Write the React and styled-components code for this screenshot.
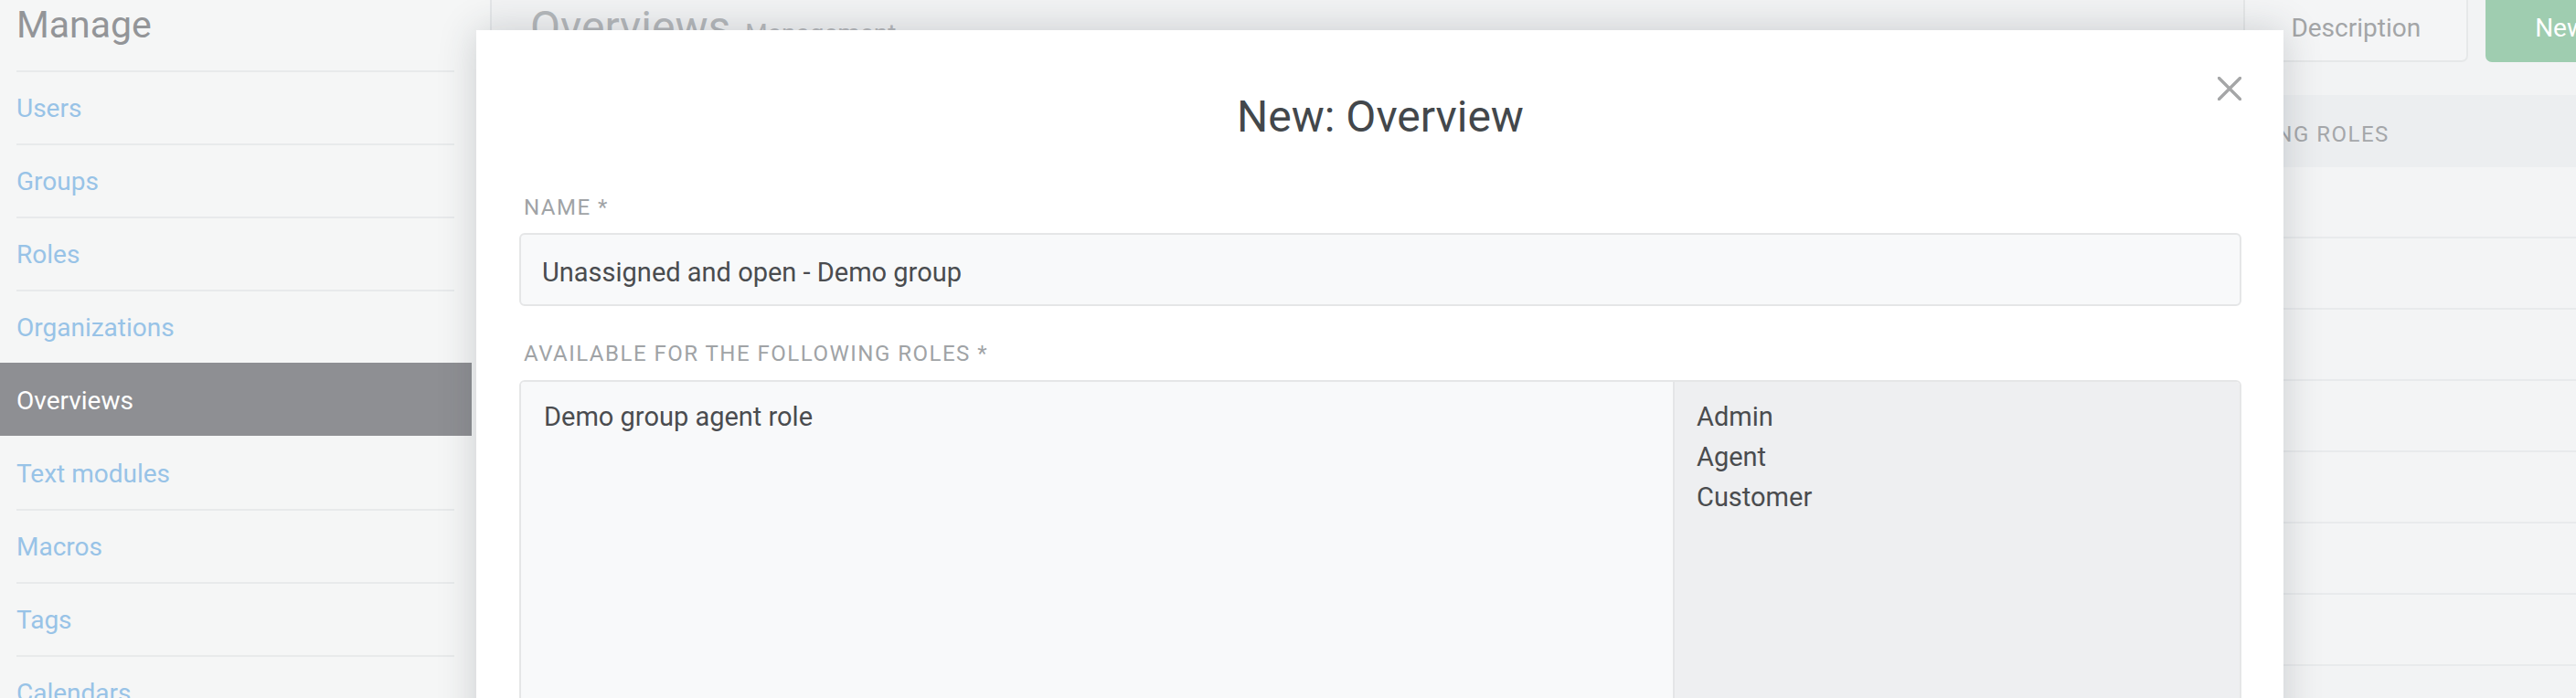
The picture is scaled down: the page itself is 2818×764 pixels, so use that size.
import React from 'react';
import styled, { createGlobalStyle } from 'styled-components';

const GlobalStyle = createGlobalStyle`
  html, body {
    margin: 0;
    padding: 0;
    overflow: hidden;
    background: #f2f3f4;
  }
  body {
    font-family: Roboto, "Liberation Sans", sans-serif;
  }
  * {
    box-sizing: border-box;
  }
`;

const Page = styled.div`
  position: relative;
  display: flex;
  width: 2927px;
  height: 764px;
  overflow: hidden;
`;

const Sidebar = styled.aside`
  width: 536px;
  flex-shrink: 0;
  background: #f5f6f6;
  padding-right: 20px;
`;

const SideTitle = styled.h2`
  margin: 0;
  height: 77px;
  padding: 3px 0 0 18px;
  font-size: 41px;
  font-weight: 400;
  line-height: 1.2;
  color: #939598;
`;

const NavItem = styled.div`
  height: 80px;
  padding: 0 19px 0 18px;
  background: ${p => (p.$active ? '#8e8f93' : 'transparent')};
`;

const NavLabel = styled.div`
  height: 100%;
  display: flex;
  align-items: center;
  border-top: 2px solid ${p => (p.$line ? '#e8eaeb' : 'transparent')};
  font-size: 28px;
  color: ${p => (p.$active ? '#ffffff' : '#98c3e7')};
`;

const Main = styled.main`
  flex: 1;
  border-left: 2px solid #e4e6e8;
  padding: 0 44px 0 42px;
  background: #f2f3f4;
`;

const MainHeader = styled.div`
  display: flex;
  align-items: flex-start;
  justify-content: space-between;
  margin-top: -14px;
  height: 82px;
`;

const PageTitle = styled.h1`
  margin: 0;
  padding-top: 15px;
  font-size: 48px;
  font-weight: 400;
  line-height: 1.2;
  color: #b5b8bb;
`;

const SubTitle = styled.small`
  margin-left: 16px;
  font-size: 28px;
  color: #b8babd;
`;

const Actions = styled.div`
  display: flex;
  gap: 19px;
`;

const Button = styled.button`
  height: 82px;
  padding: 6px ${p => (p.$primary ? '52px' : '50px')} 0;
  border: 2px solid ${p => (p.$primary ? '#9fcdb0' : '#e6e8e9')};
  border-radius: 7px;
  background: ${p => (p.$primary ? '#9fcdb0' : '#f4f5f6')};
  color: ${p => (p.$primary ? '#ffffff' : '#a3a5a7')};
  font-family: inherit;
  font-size: 28px;
`;

const Table = styled.div`
  margin-top: 36px;
`;

const TableHead = styled.div`
  display: grid;
  grid-template-columns: 1fr 778px;
  align-items: center;
  height: 79px;
  background: #eceef0;
`;

const HeadCell = styled.div`
  padding: 6px 20px 0;
  font-size: 24px;
  letter-spacing: 1.5px;
  text-transform: uppercase;
  color: #a5a7aa;
`;

const Row = styled.div`
  height: 78px;
  border-bottom: 2px solid #e8eaec;
  background: #f3f4f5;
`;

const Modal = styled.div`
  position: absolute;
  left: 521px;
  top: 33px;
  width: 1977px;
  height: 800px;
  padding: 0 46px 0 47px;
  background: #ffffff;
  box-shadow: 0 0 40px rgba(40, 50, 60, 0.2);
`;

const ModalHeader = styled.div`
  display: grid;
  grid-template-columns: 1fr auto 1fr;
  align-items: start;
`;

const ModalTitle = styled.h1`
  grid-column: 2;
  margin: 66px 0 0;
  font-size: 48px;
  font-weight: 400;
  line-height: 1.2;
  color: #43474b;
`;

const Close = styled.button`
  justify-self: end;
  margin-top: 51px;
  width: 26px;
  height: 26px;
  padding: 0;
  border: 0;
  background: none;
  display: flex;
`;

const Field = styled.div`
  margin-top: ${p => p.$gap}px;
`;

const Label = styled.label`
  display: block;
  margin-bottom: 14px;
  padding-left: 5px;
  font-size: 24px;
  line-height: 1.2;
  letter-spacing: 1.5px;
  text-transform: uppercase;
  color: #a0a3a6;
`;

const Input = styled.div`
  height: 80px;
  display: flex;
  align-items: center;
  padding: 6px 23px 0;
  border: 2px solid #e5e6e7;
  border-radius: 6px;
  background: #f8f9fa;
  font-size: 29px;
  color: #4a4c4f;
`;

const RoleBox = styled.div`
  display: grid;
  grid-template-columns: 1fr 620px;
  height: 400px;
  border: 2px solid #e5e6e7;
  border-radius: 6px;
  overflow: hidden;
`;

const RoleList = styled.div`
  padding: 16px 24px 13px ${p => (p.$available ? '24px' : '25px')};
  background: ${p => (p.$available ? '#eeeff1' : '#f8f9fa')};
  border-left: ${p => (p.$available ? '2px solid #e4e5e7' : '0')};
`;

const RoleOption = styled.div`
  font-size: 29px;
  line-height: 44px;
  color: #4a4c4f;
`;

const navItems = [
  'Users',
  'Groups',
  'Roles',
  'Organizations',
  'Overviews',
  'Text modules',
  'Macros',
  'Tags',
  'Calendars',
];

const activeItem = 'Overviews';

export default function App() {
  return (
    <>
      <GlobalStyle />
      <Page>
        <Sidebar>
          <SideTitle>Manage</SideTitle>
          {navItems.map((item, i) => {
            const active = item === activeItem;
            const afterActive = i > 0 && navItems[i - 1] === activeItem;
            return (
              <NavItem key={item} $active={active}>
                <NavLabel $active={active} $line={!active && !afterActive}>
                  {item}
                </NavLabel>
              </NavItem>
            );
          })}
        </Sidebar>

        <Main>
          <MainHeader>
            <PageTitle>
              Overviews<SubTitle>Management</SubTitle>
            </PageTitle>
            <Actions>
              <Button>Description</Button>
              <Button $primary>New</Button>
            </Actions>
          </MainHeader>
          <Table>
            <TableHead>
              <HeadCell>Name</HeadCell>
              <HeadCell>Available for the following roles</HeadCell>
            </TableHead>
            {[0, 1, 2, 3, 4, 5, 6].map(r => (
              <Row key={r} />
            ))}
          </Table>
        </Main>

        <Modal>
          <ModalHeader>
            <ModalTitle>New: Overview</ModalTitle>
            <Close aria-label="Close">
              <svg width="26" height="26" viewBox="0 0 26 26">
                <path d="M1.5 1.5 L24.5 24.5 M24.5 1.5 L1.5 24.5" stroke="#a5a6a7" strokeWidth="3.4" strokeLinecap="round" />
              </svg>
            </Close>
          </ModalHeader>

          <Field $gap={56}>
            <Label>Name *</Label>
            <Input>Unassigned and open - Demo group</Input>
          </Field>

          <Field $gap={38}>
            <Label>Available for the following roles *</Label>
            <RoleBox>
              <RoleList>
                <RoleOption>Demo group agent role</RoleOption>
              </RoleList>
              <RoleList $available>
                <RoleOption>Admin</RoleOption>
                <RoleOption>Agent</RoleOption>
                <RoleOption>Customer</RoleOption>
              </RoleList>
            </RoleBox>
          </Field>
        </Modal>
      </Page>
    </>
  );
}
